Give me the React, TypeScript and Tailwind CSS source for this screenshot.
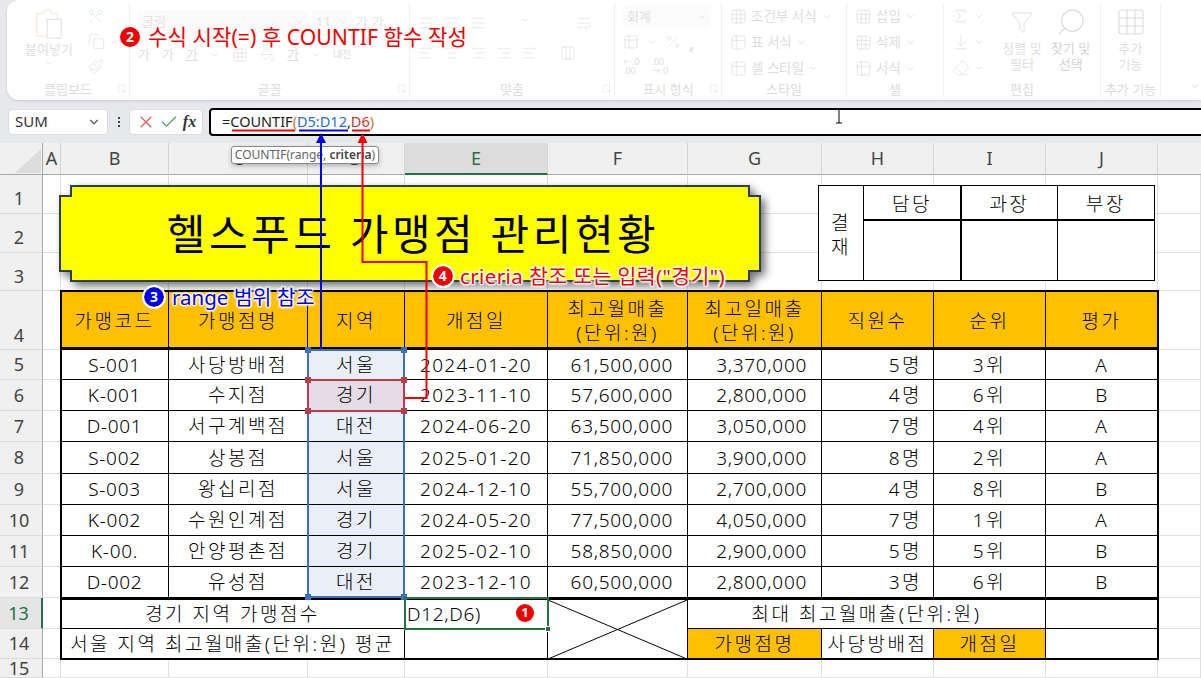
import { ChevronDown, Check, X, Scissors, Copy, Paintbrush, Sigma, Search, Eraser, Percent, Table2, Grid3x3, ArrowDownToLine, Funnel, AlignJustify, AlignLeft, AlignRight, AlignCenter, Columns3, PaintBucket, WrapText, SquareArrowOutDownRight } from 'lucide-react';

const COLS = ['A', 'B', 'C', 'D', 'E', 'F', 'G', 'H', 'I', 'J'];
const FAINT = '#dedede';

const ROWS = [
  ['S-001', '사당방배점', '서울', '2024-01-20', '61,500,000', '3,370,000', '5명', '3위', 'A'],
  ['K-001', '수지점', '경기', '2023-11-10', '57,600,000', '2,800,000', '4명', '6위', 'B'],
  ['D-001', '서구계백점', '대전', '2024-06-20', '63,500,000', '3,050,000', '7명', '4위', 'A'],
  ['S-002', '상봉점', '서울', '2025-01-20', '71,850,000', '3,900,000', '8명', '2위', 'A'],
  ['S-003', '왕십리점', '서울', '2024-12-10', '55,700,000', '2,700,000', '4명', '8위', 'B'],
  ['K-002', '수원인계점', '경기', '2024-05-20', '77,500,000', '4,050,000', '7명', '1위', 'A'],
  ['K-00.', '안양평촌점', '경기', '2025-02-10', '58,850,000', '2,900,000', '5명', '5위', 'B'],
  ['D-002', '유성점', '대전', '2023-12-10', '60,500,000', '2,800,000', '3명', '6위', 'B'],
];

const HEAD = ['가맹코드', '가맹점명', '지역', '개점일', '최고월매출\n(단위:원)', '최고일매출\n(단위:원)', '직원수', '순위', '평가'];

// hangul in the sheet runs wider than Noto, so it gets more spacing than digits
const track = (s: string) =>
  /[가-힣]/.test(s) ? 'tracking-[2.5px]' : /\d{4}-/.test(s) ? 'tracking-[1.3px]' : 'tracking-[0.7px]';

function RibbonGroup({ label, width, launcher, children }: { label: string; width: string; launcher?: boolean; children?: React.ReactNode }) {
  return (
    <div className={`${width} relative h-[94px] mt-[3px] flex flex-col border-r border-[#f1f1f1] shrink-0`}>
      <div className="flex-1 min-h-0 px-2">{children}</div>
      <div className="text-center text-[13px] leading-[16px] text-[#dcdcdc]">{label}</div>
      {launcher && (
        <SquareArrowOutDownRight size={9} strokeWidth={1} color="#cfcfcf" className="absolute right-[3px] bottom-[4px]" />
      )}
    </div>
  );
}

function StyleRow({ text, icon: Icon }: { text: string; icon: typeof Table2 }) {
  return (
    <div className="h-[26px] flex items-center gap-1 text-[13.5px] text-[#dedede] whitespace-nowrap">
      <Icon size={17} strokeWidth={1} color={FAINT} />
      {text}
      <ChevronDown size={11} color={FAINT} />
    </div>
  );
}

function Ribbon() {
  return (
    <div className="h-[100px] bg-[#e9e9ed]">
      <div className="ml-[7px] h-[100px] rounded-l-xl bg-white shadow-[0_1px_3px_rgba(0,0,0,0.12)] flex relative">
        {/* clipboard */}
        <RibbonGroup label="클립보드" width="w-[123px]" launcher>
          <div className="flex">
            <div className="w-[68px] flex flex-col items-center">
              <svg width="30" height="32" viewBox="0 0 32 34" fill="none" className="mt-[5px]">
                <path d="M3 6h6l2-4h6l2 4h6v24H3z" stroke="#f6e8d4" strokeWidth="1.2" />
                <rect x="14" y="12" width="15" height="20" stroke="#dcdcdc" fill="#fff" />
              </svg>
              <span className="text-[13px] leading-[18px] text-[#dedede] whitespace-nowrap">붙여넣기</span>
              <ChevronDown size={10} color={FAINT} />
            </div>
            <div className="flex flex-col gap-[8px] items-center pt-[5px] pl-1">
              <Scissors size={17} strokeWidth={1} color="#cfe0ef" className="rotate-90" />
              <div className="flex items-center gap-1 -mr-4">
                <Copy size={17} strokeWidth={1} color={FAINT} />
                <ChevronDown size={10} color={FAINT} />
              </div>
              <Paintbrush size={17} strokeWidth={1} color={FAINT} />
            </div>
          </div>
        </RibbonGroup>
        {/* font */}
        <RibbonGroup label="글꼴" width="w-[280px]" launcher>
          <div className="flex items-center gap-1 text-[13px] text-[#e4e4e4] pt-[7px]">
            <div className="w-[170px] h-[24px] rounded bg-[#fafafa] flex items-center justify-between px-1">
              굴림 <ChevronDown size={10} color={FAINT} />
            </div>
            <div className="w-[40px] h-[24px] rounded bg-[#fafafa] flex items-center justify-between px-1">
              11 <ChevronDown size={10} color={FAINT} />
            </div>
            <span>가</span>
            <span>가</span>
          </div>
          <div className="flex items-center gap-3 mt-[11px] text-[13px] text-[#e0e0e0]">
            <span>가</span>
            <span>가</span>
            <span className="underline">가</span>
            <ChevronDown size={10} color={FAINT} />
            <Grid3x3 size={16} strokeWidth={1} color={FAINT} />
            <PaintBucket size={15} strokeWidth={1} color={FAINT} />
            <span className="underline">가</span>
            <ChevronDown size={10} color={FAINT} />
            <span className="text-[10px]">내천</span>
          </div>
        </RibbonGroup>
        {/* align */}
        <RibbonGroup label="맞춤" width="w-[205px]" launcher>
          <div className="flex gap-[10px] pt-[12px]">
            <AlignJustify size={16} strokeWidth={1} color={FAINT} />
            <AlignJustify size={16} strokeWidth={1} color={FAINT} />
            <AlignJustify size={16} strokeWidth={1} color={FAINT} />
            <ChevronDown size={10} color={FAINT} className="ml-6" />
            <WrapText size={16} strokeWidth={1} color={FAINT} className="ml-9" />
          </div>
          <div className="flex gap-[10px] mt-[14px]">
            <AlignLeft size={16} strokeWidth={1} color={FAINT} />
            <AlignCenter size={16} strokeWidth={1} color={FAINT} />
            <AlignRight size={16} strokeWidth={1} color={FAINT} />
            <AlignRight size={16} strokeWidth={1} color={FAINT} />
            <AlignLeft size={16} strokeWidth={1} color={FAINT} />
            <Columns3 size={16} strokeWidth={1} color={FAINT} className="ml-3" />
          </div>
        </RibbonGroup>
        {/* number */}
        <RibbonGroup label="표시 형식" width="w-[107px]" launcher>
          <div className="w-[88px] h-[24px] mt-[2px] rounded bg-[#fbfbfb] flex items-center justify-between px-1 text-[13px] text-[#e0e0e0]">
            회계 <ChevronDown size={10} color={FAINT} />
          </div>
          <div className="flex items-center gap-2 mt-[5px]">
            <Table2 size={16} strokeWidth={1} color={FAINT} />
            <ChevronDown size={10} color={FAINT} />
            <Percent size={16} strokeWidth={1} color={FAINT} />
            <span className="text-[20px] leading-[16px] font-bold text-[#e4e4e4]">,</span>
          </div>
          <div className="flex gap-3 mt-[7px] text-[9px] leading-[9px] text-[#e0e0e0]">
            <span>←.0<br />.00</span>
            <span>.00<br />→.0</span>
          </div>
        </RibbonGroup>
        {/* styles */}
        <RibbonGroup label="스타일" width="w-[125px]">
          <StyleRow text="조건부 서식" icon={Grid3x3} />
          <StyleRow text="표 서식" icon={Table2} />
          <StyleRow text="셀 스타일" icon={Table2} />
        </RibbonGroup>
        {/* cells */}
        <RibbonGroup label="셀" width="w-[97px]">
          <StyleRow text="삽입" icon={Grid3x3} />
          <StyleRow text="삭제" icon={Grid3x3} />
          <StyleRow text="서식" icon={Table2} />
        </RibbonGroup>
        {/* editing */}
        <RibbonGroup label="편집" width="w-[157px]">
          <div className="flex gap-1">
            <div className="flex flex-col gap-[8px] w-[46px] pt-[4px]">
              <div className="flex items-center gap-1"><Sigma size={18} strokeWidth={1} color={FAINT} /><ChevronDown size={10} color={FAINT} /></div>
              <div className="flex items-center gap-1"><ArrowDownToLine size={18} strokeWidth={1} color={FAINT} /><ChevronDown size={10} color={FAINT} /></div>
              <div className="flex items-center gap-1"><Eraser size={18} strokeWidth={1} color="#f0d8f0" /><ChevronDown size={10} color={FAINT} /></div>
            </div>
            <div className="w-[44px] flex flex-col items-center text-[13px] leading-[16px] text-[#e0e0e0] pt-[3px]">
              <div className="h-[32px] flex items-center"><Funnel size={24} strokeWidth={1} color={FAINT} /></div>
              <span className="whitespace-nowrap mt-[2px]">정렬 및</span>
              <span className="whitespace-nowrap">필터</span>
            </div>
            <div className="w-[44px] ml-[2px] flex flex-col items-center text-[13px] leading-[16px] text-[#d4d4d4] pt-[3px]">
              <Search size={32} strokeWidth={0.8} color="#d8d8d8" className="-scale-x-100" />
              <span className="whitespace-nowrap mt-[2px]">찾기 및</span>
              <span className="whitespace-nowrap">선택</span>
            </div>
          </div>
        </RibbonGroup>
        {/* add-ins */}
        <RibbonGroup label="추가 기능" width="w-[60px]">
          <div className="flex flex-col items-center text-[13px] leading-[16px] text-[#e0e0e0] pt-[3px]">
            <Grid3x3 size={32} strokeWidth={0.8} color={FAINT} />
            <span className="mt-[2px]">추가</span>
            <span>기능</span>
          </div>
        </RibbonGroup>
        <ChevronDown size={12} color="#d8d8d8" className="absolute right-0 bottom-[8px]" />
      </div>
    </div>
  );
}

function FormulaBar() {
  return (
    <div className="h-[43px] bg-[#e7e8ec] flex items-center pl-2 gap-[6px]">
      <div className="w-[100px] h-[26px] rounded bg-white border border-[#dcdcdc] flex items-center justify-between px-[6px] text-[15px] text-[#333]">
        SUM <ChevronDown size={14} color="#555" />
      </div>
      <div className="w-[9px] flex flex-col items-center gap-[2px]">
        <span className="w-[2px] h-[2px] bg-[#444]" />
        <span className="w-[2px] h-[2px] bg-[#444]" />
        <span className="w-[2px] h-[2px] bg-[#444]" />
      </div>
      <div className="w-[74px] h-[26px] rounded bg-white border border-[#dcdcdc] flex items-center justify-around px-1">
        <X size={20} strokeWidth={1.3} color="#e2574c" />
        <Check size={20} strokeWidth={1.3} color="#3f9a5c" />
        <span className="font-['Liberation_Serif',serif] italic font-bold text-[16px] text-[#333]">fx</span>
      </div>
      <div className="flex-1 h-[28px] rounded-l-[4px] bg-white border-y-2 border-l-2 border-black flex items-center pl-[11px] text-[14.5px] text-[#222]">
        =COUNTIF<span className="text-[#c77a20]">(</span>
        <span className="text-[#1f6fd0]">D5:D12</span>,<span className="text-[#c0392b]">D6</span>
        <span className="text-[#c77a20]">)</span>
      </div>
    </div>
  );
}

function TableCell({ text, className = '' }: { text?: string; className?: string }) {
  return (
    <div className={`flex items-center justify-center border-r border-b border-black whitespace-pre-line text-center leading-[24px] ${text ? track(text) : ''} ${className}`}>
      {text}
    </div>
  );
}

function DataTable() {
  return (
    <div className="col-start-3 col-end-12 row-start-5 row-end-16 grid grid-cols-subgrid grid-rows-subgrid outline-2 outline-black -outline-offset-1 bg-white text-[19px] text-black font-light">
      {HEAD.map((h, i) => (
        <TableCell key={h + i} text={h} className="bg-[#ffc000] border-b-[3px] pt-[4px]" />
      ))}
      {ROWS.map((row, r) =>
        row.map((v, c) => (
          <TableCell
            key={`${r}-${c}`}
            text={v}
            className={
              c === 2
                ? r === 1 ? 'bg-[#e6dce6]' : 'bg-[#e9eef8]'
                : c === 4 || c === 5 ? 'justify-end! pr-[14px]' : c === 6 ? 'justify-end! pr-[11px]' : ''
            }
          />
        )),
      )}
      <TableCell text="경기 지역 가맹점수" className="col-span-3 border-t-2" />
      <TableCell text="D12,D6)" className="border-t-2 justify-start! pl-[2px]" />
      <div className="row-span-2 border-r border-t-2 border-black relative">
        <svg className="absolute inset-0 w-full h-full" viewBox="0 0 140 60" preserveAspectRatio="none">
          <path d="M0 0L140 60M140 0L0 60" stroke="#000" strokeWidth="1" />
        </svg>
      </div>
      <TableCell text="최대 최고월매출(단위:원)" className="col-span-3 border-t-2" />
      <TableCell className="border-t-2" />
      <TableCell text="서울 지역 최고월매출(단위:원) 평균" className="col-span-3 border-b-0" />
      <TableCell className="border-b-0" />
      <TableCell text="가맹점명" className="bg-[#ffc000] border-b-0" />
      <TableCell text="사당방배점" className="border-b-0" />
      <TableCell text="개점일" className="bg-[#ffc000] border-b-0" />
      <TableCell className="border-b-0" />
    </div>
  );
}

function Sheet() {
  const blank = 'border-r border-b border-[#e0e0e0] bg-white';
  const rowHead = (n: number) => (
    <div
      key={`rh${n}`}
      className={`flex justify-center pr-1 text-[18px] border-r border-b ${
        n === 13 ? 'bg-[#e4e4e4] border-r-2 border-r-[#217346] text-[#217346]' : 'bg-[#f0f0f0] border-r-[#a8a8a8] text-[#444]'
      } border-b-[#dcdcdc] ${n === 4 ? 'items-end' : 'items-center'} ${n <= 3 ? 'pt-[9px]' : ''}`}
    >
      {n}
    </div>
  );
  const cells = [];
  for (let n = 1; n <= 15; n++) {
    cells.push(rowHead(n));
    if (n <= 3 || n === 15) {
      for (let c = 0; c < 11; c++) cells.push(<div key={`b${n}-${c}`} className={blank} />);
    } else {
      cells.push(<div key={`a${n}`} className={blank} />);
      cells.push(<div key={`k${n}`} className={blank} />);
    }
  }
  return (
    <div className="grid grid-cols-[43px_18px_108px_139px_97px_143px_140px_134px_112px_112px_112px_43px] grid-rows-[32px_39px_39px_38px_59px_30px_31px_31px_32px_31px_31px_31px_31px_31px_30px_19px] overflow-hidden">
      {/* column headers */}
      <div className="bg-[#f0f0f0] border-r border-b border-[#a8a8a8] relative">
        <svg className="absolute right-[1px] bottom-[1px]" width="26" height="24" viewBox="0 0 26 24">
          <path d="M26 0V24H0z" fill="#dcdcdc" />
        </svg>
      </div>
      {COLS.map((c) => (
        <div
          key={c}
          className={`flex items-center justify-center text-[18px] border-r border-[#d4d4d4] border-b ${
            c === 'E' ? 'bg-[#dcdcdc] text-[#217346] border-b-2 border-b-[#217346]' : 'bg-[#f0f0f0] text-[#444] border-b-[#a8a8a8]'
          }`}
        >
          {c}
        </div>
      ))}
      <div className="bg-[#f0f0f0] border-b border-[#a8a8a8]" />
      {cells}
      <DataTable />
    </div>
  );
}

function Handle({ className }: { className: string }) {
  return <span className={`absolute w-[6px] h-[6px] ${className}`} />;
}

const GLOW = '[text-shadow:0_0_2px_#fff,0_0_2px_#fff,0_0_3px_#fff,0_0_3px_#fff,1px_1px_2px_#fff,-1px_-1px_2px_#fff,1px_-1px_2px_#fff,-1px_1px_2px_#fff]';

function Overlays() {
  return (
    <>
      {/* title plaque */}
      <div className="absolute left-[59px] top-[185px] w-[702px] h-[97px] flex items-center justify-center pl-[6px]">
        <svg className="absolute inset-0 w-full h-full drop-shadow-[4px_4px_4px_rgba(0,0,0,0.55)]" viewBox="0 0 702 97">
          <path d="M12 1H690V11H701V86H690V96H12V86H1V11H12z" fill="#ffff00" stroke="#2c3e57" strokeWidth="2" />
        </svg>
        <span className="relative text-[42px] text-black tracking-[3.5px] font-normal">헬스푸드 가맹점 관리현황</span>
      </div>

      {/* approval box */}
      <div className="absolute left-[818px] top-[185px] w-[337px] h-[96px] grid grid-cols-[45px_98px_96px_1fr] grid-rows-[35px_1fr] border border-black bg-white text-[19px] font-light tracking-[2.5px] text-black">
        <div className="row-span-2 flex flex-col items-center justify-center border-r border-black leading-[24px] pt-[3px]">
          <span>결</span>
          <span>재</span>
        </div>
        <div className="flex items-center justify-center border-r-2 border-b-2 border-black pt-[3px]">담당</div>
        <div className="flex items-center justify-center border-r border-b-2 border-black pt-[3px]">과장</div>
        <div className="flex items-center justify-center border-b-2 border-black pt-[3px]">부장</div>
        <div className="border-r-2 border-black" />
        <div className="border-r border-black" />
        <div />
      </div>

      {/* range selections */}
      <div className="absolute left-[307px] top-[349px] w-[98px] h-[249px] border-2 border-[#3a6fc4]">
        <Handle className="-left-[4px] -top-[4px] bg-[#3a6fc4]" />
        <Handle className="-right-[4px] -top-[4px] bg-[#3a6fc4]" />
        <Handle className="-left-[4px] -bottom-[4px] bg-[#3a6fc4]" />
        <Handle className="-right-[4px] -bottom-[4px] bg-[#3a6fc4]" />
      </div>
      <div className="absolute left-[307px] top-[379px] w-[98px] h-[33px] border-2 border-[#b83c4a]">
        <Handle className="-left-[4px] -top-[4px] bg-[#b83c4a]" />
        <Handle className="-right-[4px] -top-[4px] bg-[#b83c4a]" />
        <Handle className="-left-[4px] -bottom-[4px] bg-[#b83c4a]" />
        <Handle className="-right-[4px] -bottom-[4px] bg-[#b83c4a]" />
      </div>
      <div className="absolute left-[404px] top-[597px] w-[145px] h-[33px] border-2 border-[#217346]">
        <Handle className="-right-[4px] -bottom-[4px] bg-[#217346] border border-white" />
      </div>

      {/* tooltip */}
      <div className="absolute left-[231px] top-[146px] w-[148px] h-[18px] rounded-[3px] border border-[#8a8a8a] bg-white shadow-[0_2px_5px_rgba(0,0,0,0.25)] flex items-center justify-center text-[12px] text-[#666] whitespace-nowrap">
        COUNTIF(range,&nbsp;<b className="font-semibold text-[#444]">criteria</b>)
      </div>

      {/* arrows + underlines */}
      <svg className="absolute inset-0 pointer-events-none" width="1201" height="678" viewBox="0 0 1201 678" fill="none">
        <path d="M232 130.5H295" stroke="#f00000" strokeWidth="2" />
        <path d="M299 130.5H348" stroke="#0000f0" strokeWidth="2" />
        <path d="M352 130.5H370" stroke="#f00000" strokeWidth="2" />
        <path d="M321 349V140" stroke="#0000f0" strokeWidth="2" />
        <path d="M321 133l-5 10h10z" fill="#0000f0" />
        <path d="M405 398H426.5V262H362.5V140" stroke="#f00000" strokeWidth="2" />
        <path d="M362.5 133l-5 10h10z" fill="#f00000" />
        {/* text cursor */}
        <path d="M836 109h6M839 109v14M836 123h6" stroke="#000" strokeWidth="1" />
      </svg>

      {/* annotations */}
      <div className="absolute left-[120px] top-[24px] flex items-center gap-[8px] text-[21.2px] leading-[26px] text-[#f00000] whitespace-nowrap font-normal">
        <span className="w-[20px] h-[20px] rounded-full bg-[#f00000] text-white text-[14px] font-bold flex items-center justify-center">2</span>
        수식 시작(=) 후 COUNTIF 함수 작성
      </div>
      <div className={`absolute left-[144px] top-[284px] flex items-center gap-[8px] text-[20.5px] leading-[26px] text-[#0000f0] whitespace-nowrap ${GLOW}`}>
        <span className="w-[20px] h-[20px] rounded-full bg-[#0000f0] text-white text-[14px] font-bold flex items-center justify-center [text-shadow:none] outline-2 outline-white">3</span>
        range 범위 참조
      </div>
      <div className={`absolute left-[433px] top-[263px] flex items-center gap-[7px] text-[20.5px] tracking-[0.4px] leading-[26px] text-[#f00000] whitespace-nowrap ${GLOW}`}>
        <span className="w-[20px] h-[20px] rounded-full bg-[#f00000] text-white text-[14px] font-bold flex items-center justify-center [text-shadow:none] outline-2 outline-white">4</span>
        crieria 참조 또는 입력("경기")
      </div>
      <span className="absolute left-[516px] top-[604px] w-[18px] h-[18px] rounded-full bg-[#f00000] text-white text-[13px] font-bold flex items-center justify-center">1</span>
    </>
  );
}

export default function App() {
  return (
    <div className="relative w-[1201px] h-[678px] overflow-hidden bg-white font-['Noto_Sans','Noto_Sans_CJK_KR',sans-serif]">
      <Ribbon />
      <FormulaBar />
      <Sheet />
      <Overlays />
    </div>
  );
}
